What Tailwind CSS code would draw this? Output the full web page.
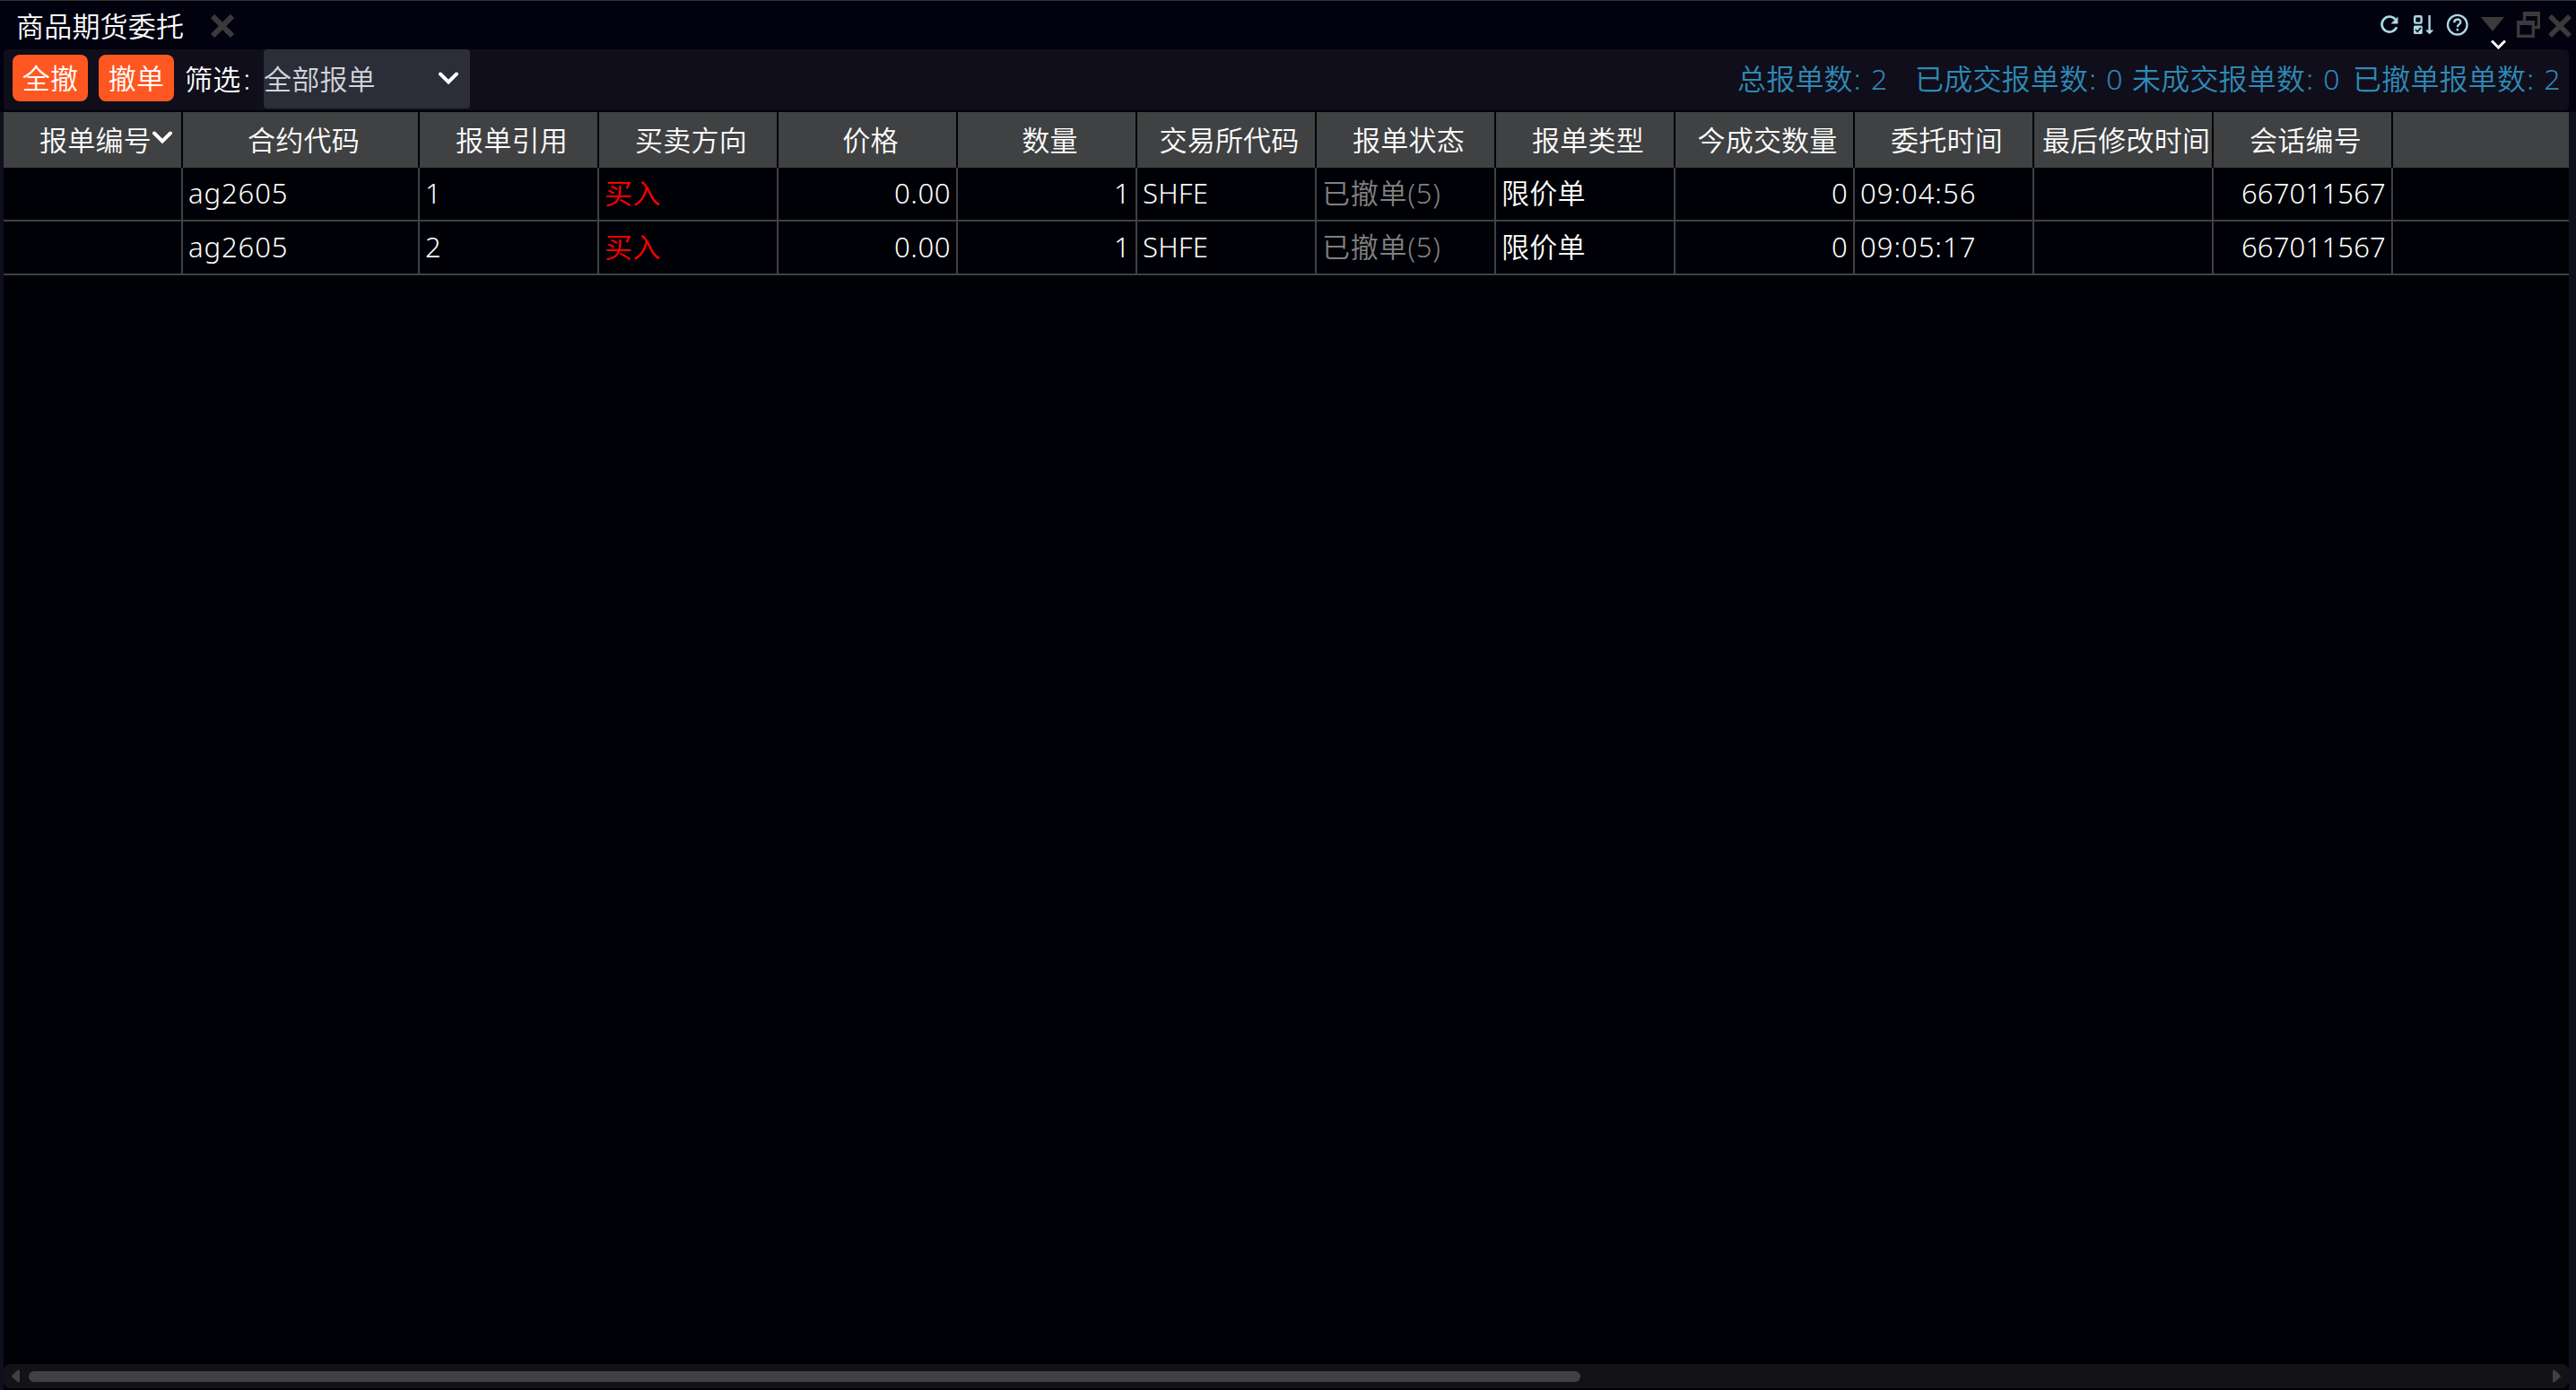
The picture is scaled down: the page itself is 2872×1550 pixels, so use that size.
<!DOCTYPE html>
<html lang="zh-CN">
<head>
    <meta charset="UTF-8">
    <meta name="viewport" content="width=device-width, initial-scale=1.0">
    <title>商品期货委托</title>
    <script src="https://cdn.jsdelivr.net/npm/@tailwindcss/browser@4"></script>
</head>
<body class="w-[2872px] h-[1550px] overflow-hidden bg-[#02010f] text-white font-[350] font-['Noto_Sans','Noto_Sans_CJK_SC',sans-serif] text-[31px] leading-[40px] tracking-[0.2px] whitespace-nowrap flex flex-col">

    <!-- Title bar -->
    <header class="h-[55px] shrink-0 border-t border-[#333333] flex justify-between">
        <div class="flex pl-[18px] pt-[8px]">
            <span class="w-[217px]">商品期货委托</span>
            <svg class="w-[26px] h-[26px] mt-[7px]" viewBox="0 0 26 26" stroke="#3a3a3a" stroke-width="6"><path d="M2 2L24 24M24 2L2 24"/></svg>
        </div>
        <div class="relative flex pr-[5px] pt-[11px]">
            <svg class="w-[22px] h-[24px] mt-[3px] mr-[15px]" viewBox="0 0 22 24" fill="none" stroke="#add8e6" stroke-width="2.6"><path d="M17.6 6.6A8.5 8.5 0 1 0 19 15.2"/><path d="M20.5 3.5V11.5H12.5Z" fill="#add8e6" stroke="none"/></svg>
            <svg class="w-[23px] h-[24px] mt-[4px] mr-[14px]" viewBox="0 0 23 24" fill="none" stroke="#add8e6" stroke-width="2.4"><rect x="2.2" y="2.2" width="7.4" height="7.4" rx="1"/><rect x="1" y="12.5" width="9.8" height="9.5" rx="1.5" fill="#add8e6" stroke="none"/><path d="M3 17L5.2 19.3L9 15" stroke="#02010f" stroke-width="1.6"/><path d="M18.6 1V19"/><path d="M14 17.5H23.5L18.7 22.2Z" fill="#add8e6" stroke="none"/></svg>
            <svg class="w-[25px] h-[25px] mt-[3px] mr-[14px]" viewBox="0 0 25 25" fill="none" stroke="#add8e6" stroke-width="2.3"><circle cx="12.8" cy="12.7" r="10.8"/><path d="M9.2 10.2C9.2 5.2 16.4 5.6 16.4 9.6C16.4 12 12.8 12.4 12.8 15.3"/><path d="M12.8 16.9V19.4"/></svg>
            <svg class="w-[26px] h-[16px] mt-[7px] mr-[14px]" viewBox="0 0 26 16" fill="#3a3a3a"><path d="M0 0H26L13 16Z"/></svg>
            <svg class="w-[26px] h-[29px] mt-[1px] mr-[9px]" viewBox="0 0 26 29" fill="none" stroke="#3a3a3a"><path d="M8.5 10V2.5H24.5V17.5H19" stroke-width="3.4"/><path d="M7 2.5H26" stroke-width="5"/><rect x="1.7" y="12" width="16.6" height="15.3" stroke-width="3.4"/><path d="M0 12.5H20" stroke-width="5"/></svg>
            <svg class="w-[26px] h-[26px] mt-[4px]" viewBox="0 0 26 26" stroke="#3a3a3a" stroke-width="5.5"><path d="M2 2L24 24M24 2L2 24"/></svg>
            <svg class="absolute right-[78px] top-[43px] w-[17px] h-[11px]" viewBox="0 0 17 11" fill="none" stroke="#fff" stroke-width="3"><path d="M1 1.5L8.5 9L16 1.5"/></svg>
        </div>
    </header>

    <!-- Toolbar -->
    <section class="h-[68px] shrink-0 mx-1 mr-2 mb-[2px] rounded-[5px] bg-[#0f0e1a] flex">
        <button class="w-[84px] h-[52px] mt-[6px] ml-[10px] rounded-[8px] bg-[#ff5722]">全撤</button>
        <button class="w-[84px] h-[52px] mt-[6px] ml-[12px] rounded-[8px] bg-[#ff5722]">撤单</button>
        <label class="w-[88px] pl-[12px] mt-[13px] shrink-0">筛选<span class="ml-[3px]">:</span></label>
        <div class="w-[230px] h-[66px] ml-[12px] rounded-[4px] bg-[#2b2e39] text-[#d3d4dc] flex justify-between pt-[13px] pr-[12px]">
            <span>全部报单</span>
            <svg class="w-[24px] h-[15px] mt-[12px]" viewBox="0 0 24 15" fill="none" stroke="#fff" stroke-width="3.9" stroke-linecap="round"><path d="M3 2.5L12 11.5L21 2.5"/></svg>
        </div>
        <div class="ml-auto flex mt-[13px] text-[#2f8ab6] text-[32px] tracking-[0.2px]">
            <span class="w-[198px]">总报单数<span class="ml-px tracking-[1.5px]">: 2</span></span>
            <span class="w-[242px]">已成交报单数<span class="ml-px tracking-[1.5px]">: 0</span></span>
            <span class="w-[246px]">未成交报单数<span class="ml-px tracking-[1.5px]">: 0</span></span>
            <span class="w-[241px]">已撤单报单数<span class="ml-px tracking-[1.5px]">: 2</span></span>
        </div>
    </section>

    <!-- Order table -->
    <main class="flex-1 border-l-4 border-r-8 border-[#100f1c] bg-[#000106] flex flex-col">
        <div id="head" class="h-[62px] shrink-0 bg-[#404142] grid grid-cols-[200px_264px_repeat(11,200px)_196px]"></div>
        <div id="rows"></div>

        <div class="mt-auto mb-[2px] h-[27px] rounded-[8px] bg-[#131217] flex items-center px-[9px]">
            <svg class="w-[9px] h-[15px]" viewBox="0 0 9 15" fill="#414046"><path d="M9 1.5V13.5Q8 15 6.5 14L0.5 8.5Q-0.3 7.5 0.5 6.5L6.5 1Q8 0 9 1.5Z"/></svg>
            <div class="w-[1730px] h-[12px] ml-[10px] rounded-full bg-[#414046]"></div>
            <svg class="w-[9px] h-[15px] ml-auto" viewBox="0 0 9 15" fill="#414046"><path d="M0 1.5V13.5Q1 15 2.5 14L8.5 8.5Q9.3 7.5 8.5 6.5L2.5 1Q1 0 0 1.5Z"/></svg>
        </div>
    </main>

    <script>
        const columns = ["报单编号", "合约代码", "报单引用", "买卖方向", "价格", "数量", "交易所代码", "报单状态", "报单类型", "今成交数量", "委托时间", "最后修改时间", "会话编号", ""];
        const orders = [
            ["", "ag2605", "1", "买入", "0.00", "1", "SHFE", "已撤单(5)", "限价单", "0", "09:04:56", "", "667011567", ""],
            ["", "ag2605", "2", "买入", "0.00", "1", "SHFE", "已撤单(5)", "限价单", "0", "09:05:17", "", "667011567", ""]
        ];
        const rightAligned = [4, 5, 9, 12];
        const styles = { 1: "tracking-[0.9px]", 3: "text-[#ff0000]", 4: "tracking-[0.6px]", 7: "text-[#808080] tracking-[0.8px]", 10: "tracking-[1px]" };
        const sortIcon = '<svg class="absolute right-[9px] top-[21px] w-[24px] h-[15px]" viewBox="0 0 24 15" fill="none" stroke="#fff" stroke-width="3.9" stroke-linecap="round"><path d="M3 2.5L12 11.5L21 2.5"/></svg>';

        document.getElementById("head").innerHTML = columns.map((name, i) => {
            const border = i < columns.length - 1 ? "border-r-2 border-[#000106]" : "";
            return `<div class="relative ${border} pt-[11px] pl-[7px] text-center">${name}${i === 0 ? sortIcon : ""}</div>`;
        }).join("");

        document.getElementById("rows").innerHTML = orders.map(order => {
            const cells = order.map((value, i) => {
                const border = i < order.length - 1 ? "border-r-2 border-[#404142]" : "";
                const align = rightAligned.includes(i) ? "text-right" : "text-left";
                return `<div class="${border} ${align} ${styles[i] || ""} px-[6px] pt-[8px]">${value}</div>`;
            }).join("");
            return `<div class="h-[60px] border-b-2 border-[#404142] grid grid-cols-[200px_264px_repeat(11,200px)_196px]">${cells}</div>`;
        }).join("");
    </script>
</body>
</html>
